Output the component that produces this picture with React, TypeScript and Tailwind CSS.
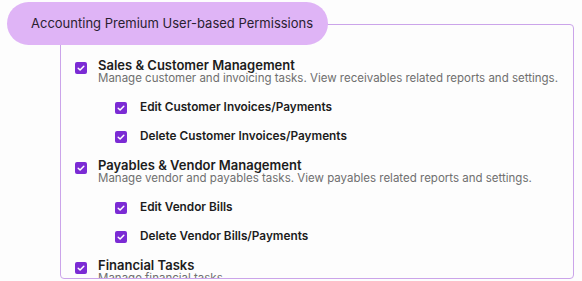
const groups = [
  {
    title: "Sales & Customer Management",
    desc: "Manage customer and invoicing tasks. View receivables related reports and settings.",
    subs: ["Edit Customer Invoices/Payments", "Delete Customer Invoices/Payments"],
  },
  {
    title: "Payables & Vendor Management",
    desc: "Manage vendor and payables tasks. View payables related reports and settings.",
    subs: ["Edit Vendor Bills", "Delete Vendor Bills/Payments"],
  },
  {
    title: "Financial Tasks",
    desc: "Manage financial tasks.",
    subs: [],
  },
];

function Check() {
  return (
    <span className="flex h-3 w-3 shrink-0 items-center justify-center rounded-[2px] bg-[#7b2bd4]">
      <svg viewBox="0 0 12 12" className="h-3 w-3" fill="none">
        <path
          d="M3.2 6.2 5.1 8 8.8 4.2"
          stroke="white"
          strokeWidth="1.5"
          strokeLinecap="round"
          strokeLinejoin="round"
        />
      </svg>
    </span>
  );
}

export default function App() {
  return (
    <div className="relative h-[281px] w-[582px] overflow-hidden bg-[#fdfdfd] font-['Inter',sans-serif] text-[#1c1c1c]">
      <div className="ml-[60px] mt-[24px] h-[255px] w-[514px] overflow-hidden rounded-[4px] border border-[#cba4ea] pl-[14px] pt-[34px]">
        {groups.map((g) => (
          <div key={g.title} className="pb-[7px]">
            <div className="flex gap-[11px]">
              <div className="mt-[3px]">
                <Check />
              </div>
              <div>
                <div className="text-[13px] font-semibold leading-[13px]">{g.title}</div>
                <div className="whitespace-nowrap text-[11.5px] leading-[13px] text-[#6f6f6f]">
                  {g.desc}
                </div>
              </div>
            </div>
            {g.subs.length > 0 && (
              <div className="pl-[40px] pt-[8px]">
                {g.subs.map((s) => (
                  <div key={s} className="flex h-[29.5px] items-center gap-[13px]">
                    <Check />
                    <span className="text-[11.8px] font-semibold">{s}</span>
                  </div>
                ))}
              </div>
            )}
          </div>
        ))}
      </div>
      <div className="absolute left-[7px] top-[2px] flex h-[43px] w-[321px] items-center rounded-full bg-[#dfb4f6] pl-[24px] text-[13px] text-[#2a2130]">
        Accounting Premium User-based Permissions
      </div>
    </div>
  );
}
